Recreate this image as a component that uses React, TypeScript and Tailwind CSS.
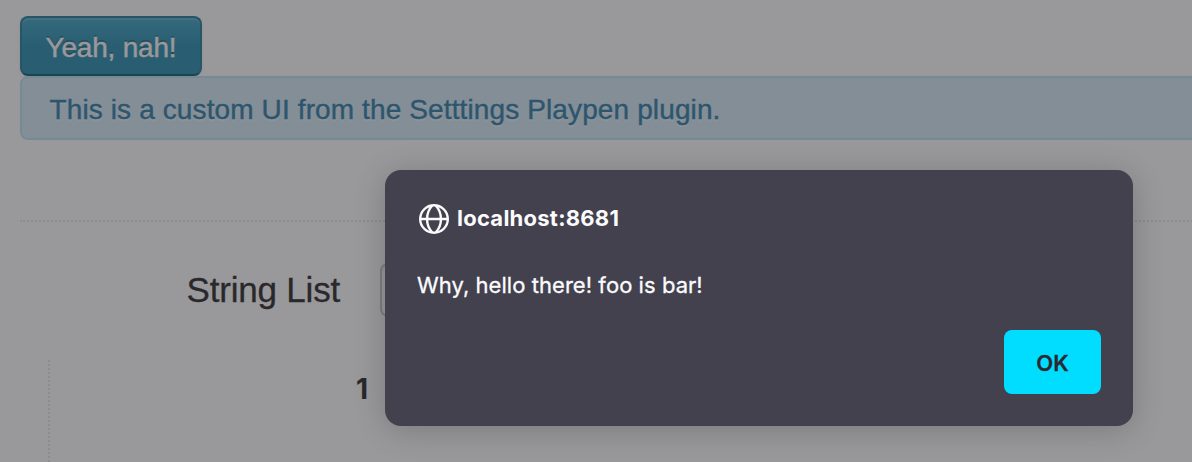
import React from "react";

function SettingsPage() {
  return (
    <main className="flex h-[462px] flex-col overflow-hidden bg-white pl-5 pt-4 font-['Liberation_Sans',Arial,sans-serif] text-[28px] leading-10 text-[#333]">
      <button className="h-[60px] w-[182px] shrink-0 whitespace-nowrap rounded-lg border-2 border-[#2f86a1] border-b-[#1f6377] bg-linear-to-b from-[#48abc9] to-[#3496b4] to-50% pt-[3px] text-center tracking-[-0.2px] text-white shadow-[inset_0_2px_0_rgba(255,255,255,0.15),0_2px_4px_rgba(0,0,0,0.05)] [-webkit-text-stroke:0.4px_white] [text-shadow:0_-2px_0_rgba(0,0,0,0.25)]">
        <span>Yeah, nah!</span>
      </button>
      <p className="h-16 w-[1200px] shrink-0 whitespace-nowrap rounded-lg border-2 border-[#bce8f1] bg-[#d9edf7] pl-[27.5px] pt-[12px] tracking-[0.12px] text-[#3a87ad] [-webkit-text-stroke:0.4px_#3a87ad] [text-shadow:0_2px_0_rgba(255,255,255,0.5)]">
        <span>This is a custom UI from the Setttings Playpen plugin.</span>
      </p>
      <hr className="mt-20 w-[1200px] shrink-0 border-0 border-t-2 border-dotted border-[#e8e8e8]" />
      <label className="mt-[41px] flex h-[54px] shrink-0 items-center">
        <span className="w-80 whitespace-nowrap text-right text-[35px] tracking-[-0.2px] [-webkit-text-stroke:0.3px_#333]">String List</span>
        <input className="ml-10 h-[54px] w-[440px] rounded-lg border-2 border-[#ccc] bg-white shadow-[inset_0_2px_2px_rgba(0,0,0,0.075)]" />
      </label>
      <section className="ml-7 mt-[43px] h-[150px] shrink-0 border-l-2 border-dotted border-[#e8e8e8] pt-[9px]">
        <div className="w-[318px] text-right font-[Inter,sans-serif] font-bold">1</div>
      </section>
    </main>
  );
}

function Globe() {
  return (
    <svg className="size-8 shrink-0" viewBox="-1.5 -1.5 32 32" fill="none" stroke="currentColor" strokeWidth="2.4" aria-hidden="true">
      <circle cx="15.500" cy="15.500" r="13.800" />
      <path d="M1.500 15.500h28M13.800 2C6.800 9.500 6.800 21.500 13.800 29M17.200 2C24.200 9.500 24.200 21.500 17.200 29" />
    </svg>
  );
}

export default function App() {
  return (
    <div className="relative h-[462px] w-full overflow-hidden">
      <SettingsPage />
      <div className="absolute inset-0 bg-[rgba(28,27,34,0.45)]" />
      <div
        role="dialog"
        className="absolute left-[385px] top-[170px] flex h-64 w-[748px] flex-col rounded-2xl bg-[#42414d] p-8 font-[Inter,sans-serif] text-[22px] leading-8 text-[#fbfbfe] shadow-[0_4px_32px_rgba(0,0,0,0.2)]"
      >
        <div className="flex h-8 items-center gap-2 font-bold">
          <Globe />
          <span className="whitespace-nowrap tracking-[0.25px]">localhost:8681</span>
        </div>
        <p className="mt-[35px] whitespace-nowrap tracking-[0.05px] [-webkit-text-stroke:0.3px_#fbfbfe]">Why, hello there! foo is bar!</p>
        <button className="mt-auto h-16 w-[97px] self-end rounded-lg bg-[#00ddff] pt-[2px] font-semibold text-[#2b2a33] [-webkit-text-stroke:0.3px_#2b2a33]">OK</button>
      </div>
    </div>
  );
}
